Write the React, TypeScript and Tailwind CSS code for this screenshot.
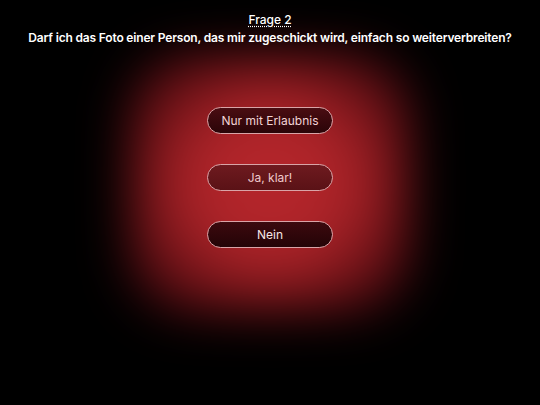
export default function App() {
  const answers = [
    { label: "Nur mit Erlaubnis", cls: "bg-gradient-to-b from-[#4a0d12] to-[#2a0508] text-[#f1d3d5]" },
    { label: "Ja, klar!", cls: "bg-gradient-to-b from-[#6e1a1f] to-[#5a1216] text-[#efc9cb]" },
    { label: "Nein", cls: "bg-gradient-to-b from-[#3c0a0e] to-[#240407] text-[#f7e6e7]" },
  ];

  return (
    <div className="relative w-[540px] h-[405px] overflow-hidden bg-black font-['Inter',sans-serif] text-white">
      {/* red glow behind the answers */}
      <div className="absolute left-[128px] top-[52px] w-[284px] h-[262px] rounded-[56px] blur-[24px] bg-[radial-gradient(ellipse_at_center,#b8272c_0%,#ab2328_38%,#6a1116_68%,#220408_92%,#0a0102_100%)]" />

      <div className="relative flex flex-col items-center pt-[12px]">
        <h1 className="text-[12px] leading-[15px] font-medium underline decoration-dotted underline-offset-2">
          Frage 2
        </h1>
        <p className="mt-[3px] text-[12px] leading-[15px] font-semibold tracking-[-0.17px]">
          Darf ich das Foto einer Person, das mir zugeschickt wird, einfach so weiterverbreiten?
        </p>

        <div className="mt-[62px] flex flex-col gap-[30px]">
          {answers.map((a) => (
            <button
              key={a.label}
              className={`w-[126px] h-[27px] rounded-full border border-[#d9a4a7] text-[12px] ${a.cls}`}
            >
              {a.label}
            </button>
          ))}
        </div>
      </div>
    </div>
  );
}
